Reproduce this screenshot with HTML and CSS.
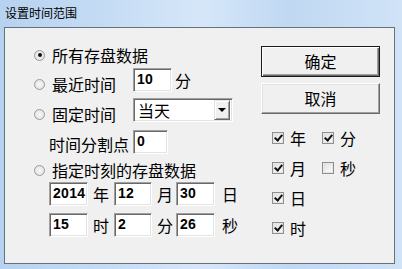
FILE: index.html
```html
<!DOCTYPE html>
<html lang="zh-CN">
<head>
    <meta charset="UTF-8">
    <title>设置时间范围</title>
    <link rel="stylesheet" href="styles.css">
</head>
<body>
    <div class="window">
        <div class="titlebar">设置时间范围</div>

        <div class="client">
            <!-- left: time range options -->
            <div class="options">
                <div class="row row-all">
                    <span class="radio checked"></span>
                    <span class="label">所有存盘数据</span>
                </div>

                <div class="row row-recent">
                    <div class="opt">
                        <span class="radio"></span>
                        <span class="label">最近时间</span>
                    </div>
                    <div class="edit w39">10</div>
                    <span class="unit-after">分</span>
                </div>

                <div class="row row-fixed">
                    <div class="opt">
                        <span class="radio"></span>
                        <span class="label">固定时间</span>
                    </div>
                    <div class="combo">
                        <span class="combo-text">当天</span>
                        <span class="combo-btn"><span class="arrow"></span></span>
                    </div>
                </div>

                <div class="row row-split">
                    <span class="label split-label">时间分割点</span>
                    <div class="edit w35">0</div>
                </div>

                <div class="row row-moment">
                    <span class="radio"></span>
                    <span class="label">指定时刻的存盘数据</span>
                </div>

                <div class="row row-date">
                    <div class="edit w39">2014</div>
                    <span class="unit u1">年</span>
                    <div class="edit w38">12</div>
                    <span class="unit u2">月</span>
                    <div class="edit w39">30</div>
                    <span class="unit u3">日</span>
                </div>

                <div class="row row-time">
                    <div class="edit w39">15</div>
                    <span class="unit u1">时</span>
                    <div class="edit w38">2</div>
                    <span class="unit u2">分</span>
                    <div class="edit w39">26</div>
                    <span class="unit u3">秒</span>
                </div>
            </div>

            <!-- right: buttons and field toggles -->
            <div class="side">
                <div class="btn default">确定</div>
                <div class="btn">取消</div>

                <div class="checks">
                    <div class="check"><span class="box on"></span>年</div>
                    <div class="check"><span class="box on"></span>分</div>
                    <div class="check"><span class="box on"></span>月</div>
                    <div class="check"><span class="box"></span>秒</div>
                    <div class="check"><span class="box on"></span>日</div>
                    <div class="check"></div>
                    <div class="check"><span class="box on"></span>时</div>
                </div>
            </div>
        </div>
    </div>
</body>
</html>
```

FILE: styles.css
```css
:root {
    --face: #f0f0f0;
    --shadow: #a0a0a0;
    --dark: #696969;
    --light: #e3e3e3;
    --frame: #c3daf3;
}

* {
    box-sizing: border-box;
    margin: 0;
    padding: 0;
}

body {
    font-family: "Noto Sans CJK SC", "Liberation Sans", sans-serif;
    background: var(--frame);
    width: 402px;
    height: 269px;
    overflow: hidden;
}

.window {
    width: 402px;
    height: 269px;
    display: flex;
    flex-direction: column;
    background: linear-gradient(90deg, #b7d2ef 0%, #c4dbf4 25%, #d6e7f9 50%, #c0d8f2 72%, #d0e3f7 100%);
}

.titlebar {
    height: 27px;
    padding-left: 5px;
    font-size: 12px;
    line-height: 26px;
    color: #000;
    flex-shrink: 0;
}

.client {
    flex: 1;
    margin: 0 7px 5px 4px;
    border: 1px solid #65717e;
    background: var(--face);
    display: flex;
}

/* ---------- left column ---------- */

.options {
    width: 256px;
    padding-top: 17px;
    display: flex;
    flex-direction: column;
}

.row {
    display: flex;
    align-items: center;
    font-size: 16px;
    line-height: 20px;
    color: #000;
}

.label {
    white-space: nowrap;
}

.radio {
    display: inline-block;
    width: 11px;
    height: 11px;
    border-radius: 50%;
    border: 1px solid #9a9a9a;
    background: radial-gradient(circle at 50% 50%, #f8f8f8 0%, #e8e8e8 60%, #d8d8d8 100%);
    margin-right: 7px;
    position: relative;
    flex-shrink: 0;
}

.radio.checked::after {
    content: "";
    position: absolute;
    left: 2.5px;
    top: 2.5px;
    width: 4px;
    height: 4px;
    border-radius: 50%;
    background: #111;
}

.row-all {
    height: 20px;
    padding-left: 29px;
}

.row-recent {
    height: 24px;
    margin-top: 3px;
}

.row-fixed {
    height: 24px;
    margin-top: 6px;
}

.opt {
    width: 128px;
    padding-left: 29px;
    padding-top: 8px;
    display: flex;
    align-items: center;
}

.opt .label {
    width: 81px;
}

.row-split {
    height: 24px;
    margin-top: 8px;
    padding-left: 44px;
}

.split-label {
    width: 84px;
    padding-top: 4px;
}

.row-moment {
    height: 20px;
    margin-top: 6px;
    padding-left: 29px;
}

.row-date {
    height: 24px;
    margin-top: 2px;
    padding-left: 44px;
}

.row-time {
    height: 24px;
    margin-top: 7px;
    padding-left: 44px;
}

.edit {
    height: 24px;
    background: #fff;
    border: 1px solid;
    border-color: var(--shadow) #fff #fff var(--shadow);
    box-shadow: inset 1px 1px 0 var(--dark), inset -1px -1px 0 var(--light);
    font-family: "Liberation Sans", sans-serif;
    font-weight: bold;
    font-size: 14px;
    line-height: 21px;
    padding-left: 3px;
    letter-spacing: 0.3px;
}

.w39 { width: 39px; }
.w38 { width: 38px; }
.w35 { width: 35px; }

.unit-after {
    margin-left: 3px;
}

.unit {
    display: inline-block;
}

.u1 { width: 26px; padding-left: 5px; }
.u2 { width: 24px; padding-left: 5px; }
.u3 { padding-left: 7px; }

.combo {
    width: 100px;
    height: 24px;
    background: #fff;
    border: 1px solid;
    border-color: var(--shadow) #fff #fff var(--shadow);
    box-shadow: inset 1px 1px 0 var(--dark), inset -1px -1px 0 var(--light);
    display: flex;
    align-items: center;
    padding: 2px;
}

.combo-text {
    flex: 1;
    padding-left: 2px;
    line-height: 20px;
}

.combo-btn {
    width: 16px;
    height: 20px;
    background: var(--face);
    border: 1px solid;
    border-color: var(--light) var(--dark) var(--dark) var(--light);
    box-shadow: inset 1px 1px 0 #fff, inset -1px -1px 0 var(--shadow);
    display: flex;
    align-items: center;
    justify-content: center;
}

.arrow {
    width: 0;
    height: 0;
    border-left: 4px solid transparent;
    border-right: 4px solid transparent;
    border-top: 4px solid #000;
}

/* ---------- right column ---------- */

.side {
    flex: 1;
    padding-top: 18px;
    display: flex;
    flex-direction: column;
}

.btn {
    width: 119px;
    height: 31px;
    background: var(--face);
    font-size: 16px;
    line-height: 28px;
    text-align: center;
    border: 1px solid;
    border-color: #fff var(--dark) var(--dark) #fff;
    box-shadow: inset -1px -1px 0 var(--shadow), inset 1px 1px 0 var(--light);
}

.btn + .btn {
    margin-top: 6px;
}

.btn.default {
    border: 1px solid #1a1a1a;
    box-shadow: inset 1px 1px 0 #fff, inset -1px -1px 0 var(--dark), inset -2px -2px 0 var(--shadow);
}

.checks {
    margin-top: 14px;
    padding-left: 11px;
    display: grid;
    grid-template-columns: 50px 50px;
    grid-auto-rows: 20px;
    row-gap: 10px;
}

.check {
    display: flex;
    align-items: center;
    font-size: 16px;
    line-height: 20px;
}

.box {
    width: 12px;
    height: 12px;
    margin-right: 6px;
    border: 1px solid #8e8f8f;
    background: linear-gradient(135deg, #dcdcdc 0%, #f2f2f2 60%, #fbfbfb 100%);
    box-shadow: inset 0 0 0 1px #e6e6e6;
    position: relative;
    flex-shrink: 0;
}

.box.on::after {
    content: "";
    position: absolute;
    left: 3px;
    top: 0px;
    width: 3px;
    height: 6px;
    border-right: 2px solid #111;
    border-bottom: 2px solid #111;
    transform: rotate(40deg);
}
```
